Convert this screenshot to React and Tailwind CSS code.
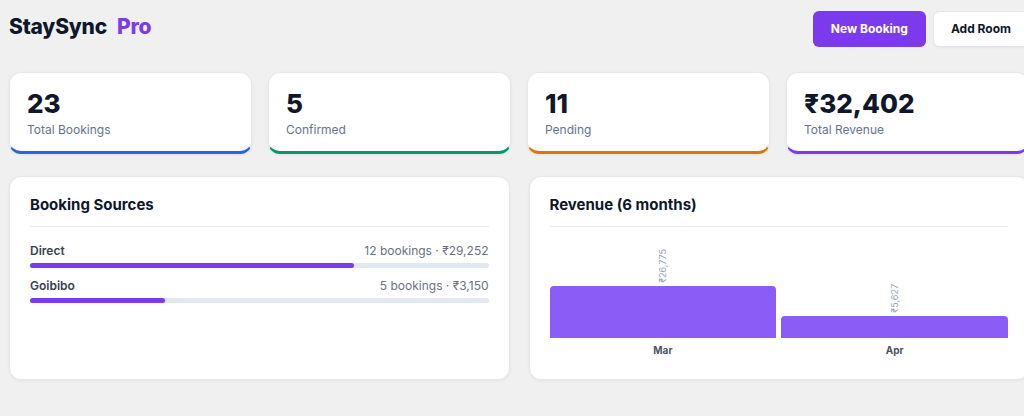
import React from "react";

const stats = [
    { value: "23", label: "Total Bookings", stripe: "border-b-[#2563eb]" },
    { value: "5", label: "Confirmed", stripe: "border-b-[#059669]" },
    { value: "11", label: "Pending", stripe: "border-b-[#d97706]" },
    { value: "₹32,402", label: "Total Revenue", stripe: "border-b-[#7c3aed]" },
];

const sources = [
    { name: "Direct", bookings: 12, revenue: "₹29,252" },
    { name: "Goibibo", bookings: 5, revenue: "₹3,150" },
];

const revenue = [
    { month: "Mar", value: "₹26,775", height: 52 },
    { month: "Apr", value: "₹5,627", height: 22 },
];

const StatCard = ({ value, label, stripe }) => (
    <div className={`bg-white rounded-xl border border-[#e6e8ee] border-b-[3px] ${stripe} shadow-[0_1px_3px_rgba(0,0,0,0.06)] px-[17px] pt-4 pb-3`}>
        <div className="text-[26px] leading-[30px] font-extrabold text-[#0f172a]">{value}</div>
        <div className="mt-[2px] text-[12px] leading-[18px] text-[#64748b]">{label}</div>
    </div>
);

const Panel = ({ title, children }) => (
    <div className="bg-white rounded-xl border border-[#e6e8ee] shadow-[0_1px_3px_rgba(0,0,0,0.06)] px-5 pt-[18px] pb-[22px]">
        <h2 className="text-[15px] leading-5 font-bold text-[#0f172a] pb-[11px] border-b border-[#e8eaf2]">{title}</h2>
        {children}
    </div>
);

export default function App() {
    const total = sources.reduce((sum, s) => sum + s.bookings, 0);

    return (
        <div className="w-[1038px] min-h-[416px] bg-[#f0f0f1] px-[9px] pt-[11px]" style={{ fontFamily: "Inter, 'Noto Sans', sans-serif" }}>
            <header className="flex items-center justify-between">
                <h1 className="mb-1 text-[21px] leading-7 font-extrabold text-[#0f172a] tracking-[-0.2px]">
                    StaySync<span className="ml-[10px] text-[#7c3aed]">Pro</span>
                </h1>
                <div className="flex gap-[7px]">
                    <button className="h-9 px-[18px] rounded-md bg-[#7c3aed] text-white text-[12px] font-bold">New Booking</button>
                    <button className="h-9 px-[17px] rounded-md bg-white border border-[#e2e5ec] text-[#0f172a] text-[12px] font-bold shadow-[0_1px_2px_rgba(0,0,0,0.05)]">Add Room</button>
                </div>
            </header>

            <div className="mt-[25px] grid grid-cols-4 gap-4">
                {stats.map((s) => (
                    <StatCard key={s.label} {...s} />
                ))}
            </div>

            <div className="mt-[22px] grid grid-cols-2 gap-[19px]">
                <Panel title="Booking Sources">
                    <div className="mt-4 space-y-[10px]">
                        {sources.map((s) => (
                            <div key={s.name}>
                                <div className="flex justify-between text-[12px] leading-4">
                                    <span className="font-semibold text-[#374151]">{s.name}</span>
                                    <span className="text-[#6b7280]">{s.bookings} bookings · {s.revenue}</span>
                                </div>
                                <div className="mt-1 h-[5px] rounded-full bg-[#e2e8f0]">
                                    <div className="h-full rounded-full bg-[#7c3aed]" style={{ width: `${(s.bookings / total) * 100}%` }} />
                                </div>
                            </div>
                        ))}
                    </div>
                </Panel>

                <Panel title="Revenue (6 months)">
                    <div className="mt-[15px] h-[96px] flex items-end gap-[5px]">
                        {revenue.map((r) => (
                            <div key={r.month} className="flex-1 flex flex-col items-center justify-end">
                                <span className="[writing-mode:vertical-rl] rotate-180 text-[9px] leading-[10px] text-[#94a3b8] mb-[3px]">{r.value}</span>
                                <div className="w-full rounded-t-[4px] bg-[#8b5cf6]" style={{ height: r.height }} />
                            </div>
                        ))}
                    </div>
                    <div className="mt-[5px] flex gap-[5px]">
                        {revenue.map((r) => (
                            <div key={r.month} className="flex-1 text-center text-[10px] leading-[14px] font-bold text-[#4b5563]">{r.month}</div>
                        ))}
                    </div>
                </Panel>
            </div>

            <div className="mt-9 h-10 bg-white rounded-t-xl border border-[#e6e8ee]" />
        </div>
    );
}
